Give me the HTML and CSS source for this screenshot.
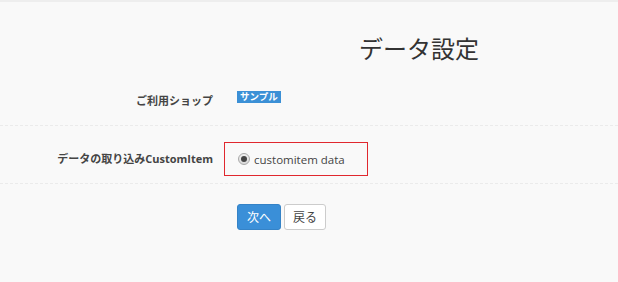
FILE: index.html
```html
<!DOCTYPE html>
<html lang="ja">
<head>
<meta charset="utf-8">
<link rel="stylesheet" href="styles.css">
</head>
<body>
<div class="page">
  <div class="title-row">
    <div class="spacer"></div>
    <h1 class="title">データ設定</h1>
  </div>
  <div class="form-row row-shop">
    <div class="label">ご利用ショップ</div>
    <div class="control"><span class="badge">サンプル</span></div>
  </div>
  <div class="form-row row-import">
    <div class="label">データの取り込みCustomItem</div>
    <div class="control">
      <label class="radio-box">
        <span class="radio"><span class="dot"></span></span>
        <span class="radio-text">customitem data</span>
      </label>
    </div>
  </div>
  <div class="actions">
    <div class="spacer"></div>
    <div class="buttons">
      <button class="btn btn-primary">次へ</button>
      <button class="btn btn-default">戻る</button>
    </div>
  </div>
</div>
</body>
</html>
```
FILE: styles.css
```css
html, body {
  margin: 0;
  padding: 0;
  background: #f9f9f9;
}
body {
  font-family: "Open Sans", "Noto Sans CJK JP", sans-serif;
  color: #333;
}
.page {
  border-top: 2px solid #eeeeee;
  height: 280px;
}
.title-row {
  display: flex;
  margin-top: 30px;
  padding-right: 17px;
}
.spacer {
  width: 237px;
  flex: none;
}
.title {
  flex: 1;
  margin: 0;
  text-align: center;
  font-weight: normal;
  font-size: 24px;
  line-height: 34px;
  color: #333;
}
.form-row {
  display: flex;
  gap: 24px;
  border-bottom: 1px dashed #ebebeb;
}
.label {
  width: 213px;
  flex: none;
  text-align: right;
  font-size: 11px;
  font-weight: bold;
  color: #444;
  line-height: 20px;
}
.row-shop {
  align-items: flex-start;
  padding: 25px 0 12px;
}
.badge {
  display: inline-block;
  background: #3b90d6;
  color: #fff;
  font-size: 9.5px;
  font-weight: bold;
  line-height: 12px;
  padding: 0 3px;
  vertical-align: top;
}
.row-import {
  align-items: center;
  padding: 16px 0 7px;
}
.radio-box {
  display: flex;
  align-items: center;
  gap: 4px;
  margin-left: -13px;
  width: 144px;
  height: 34px;
  padding-left: 13px;
  border: 1px solid #e0282e;
  box-sizing: border-box;
}
.radio {
  width: 12px;
  height: 12px;
  border-radius: 50%;
  border: 1px solid #a8a8a8;
  background: linear-gradient(#f2f2f2, #d8d8d8);
  box-sizing: border-box;
  display: flex;
  align-items: center;
  justify-content: center;
}
.dot {
  width: 6px;
  height: 6px;
  border-radius: 50%;
  background: #454545;
}
.radio-text {
  font-size: 11.5px;
  color: #444;
}
.actions {
  display: flex;
  margin-top: 20px;
}
.buttons {
  display: flex;
  gap: 3px;
}
.btn {
  height: 26px;
  padding: 0;
  white-space: nowrap;
  font-family: "Open Sans", "Noto Sans CJK JP", sans-serif;
  font-size: 12px;
  border-radius: 3px;
  box-sizing: border-box;
  cursor: pointer;
}
.btn-primary {
  width: 44px;
  background: #3a8fd8;
  border: 1px solid #3583c7;
  color: #fff;
}
.btn-default {
  width: 42px;
  background: #fff;
  border: 1px solid #cccccc;
  color: #444;
}
```
